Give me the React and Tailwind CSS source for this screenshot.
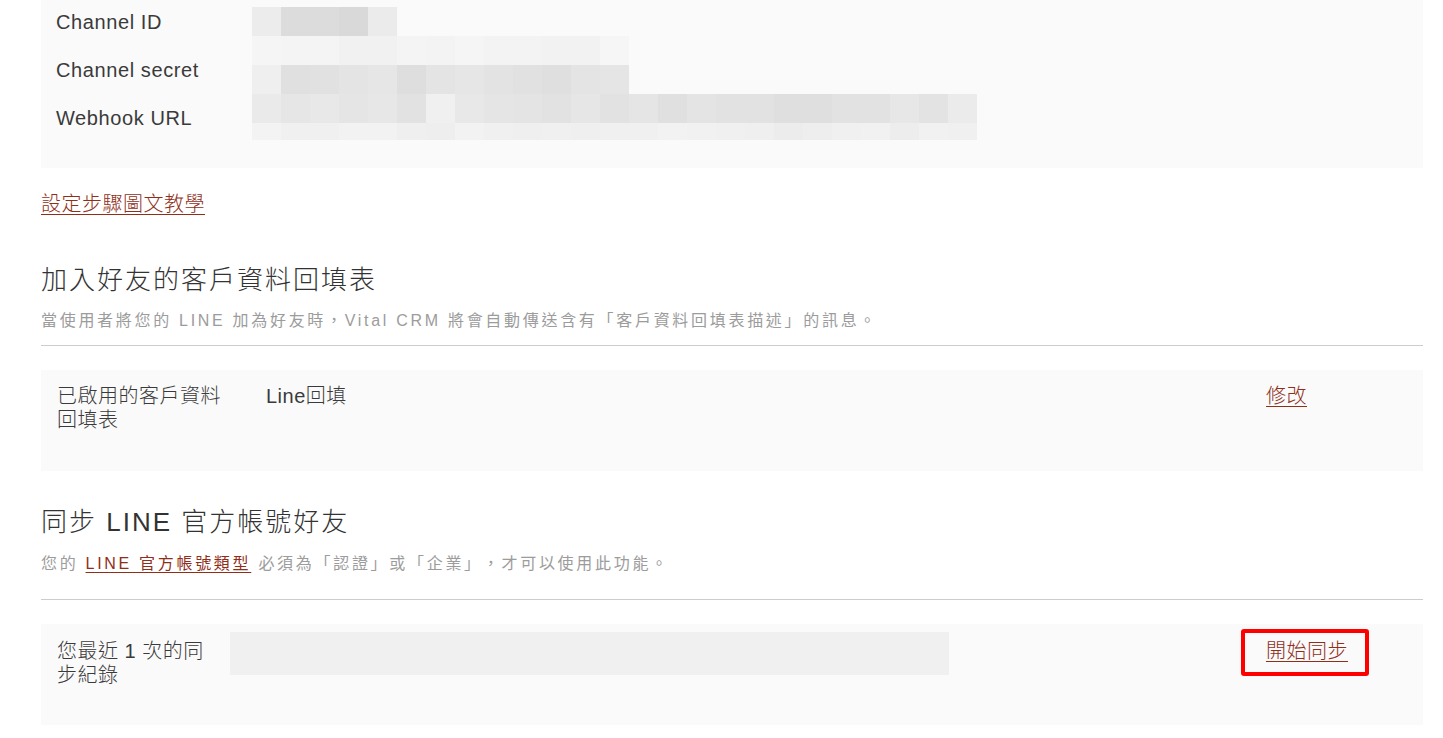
import React from "react";

const mosaicRows = [
  { y: 7, h: 29, c: [236, 220, 220, 217, 235] },
  { y: 36, h: 29, c: [245, 244, 244, 241, 241, 244, 243, 245, 243, 243, 242, 242, 246] },
  { y: 65, h: 29, c: [239, 224, 225, 228, 230, 222, 228, 230, 227, 225, 223, 228, 229] },
  {
    y: 94,
    h: 29,
    c: [234, 230, 232, 229, 231, 226, 240, 232, 229, 228, 226, 230, 226, 229, 224, 228, 226, 226, 223, 223, 226, 226, 231, 227, 235],
  },
  {
    y: 123,
    h: 17,
    c: [243, 240, 240, 242, 242, 239, 238, 242, 240, 239, 240, 239, 240, 240, 242, 241, 240, 239, 236, 238, 240, 241, 237, 241, 240],
  },
];

function Mosaic() {
  return (
    <svg width="725" height="133" viewBox="0 7 725 133" className="mt-[7px] shrink-0">
      {mosaicRows.map((r, i) =>
        r.c.map((g, j) => (
          <rect key={i + "-" + j} x={j * 29} y={r.y} width="29" height={r.h} fill={`rgb(${g},${g},${g})`} />
        ))
      )}
    </svg>
  );
}

const link = "text-[#8f2f1a] underline underline-offset-[3px] decoration-[1px]";

export default function App() {
  return (
    <div className="w-[1443px] h-[738px] overflow-hidden bg-white pl-[41px] pr-[20px] font-['Liberation_Sans','Noto_Sans_CJK_TC',sans-serif] text-[#333] [text-spacing-trim:space-all]">
      {/* top credentials panel */}
      <div className="h-[168px] bg-[#fafafa] flex pl-[15px]">
        <div className="w-[196px] -mt-[2px] text-[20px] tracking-[0.6px] leading-[48px] text-[#3a3a3a]">
          <div>Channel ID</div>
          <div>Channel secret</div>
          <div>Webhook URL</div>
        </div>
        <Mosaic />
      </div>

      <div className="mt-[24px] text-[20px] leading-[24px] tracking-[0.5px] font-light">
        <a href="#" className={link}>設定步驟圖文教學</a>
      </div>

      {/* section 1 */}
      <h2 className="mt-[46px] text-[26px] leading-[36px] tracking-[2px] font-light text-[#333]">加入好友的客戶資料回填表</h2>
      <p className="mt-[11px] text-[16px] leading-[24px] tracking-[2.7px] text-[#9c9c9c]">
        當使用者將您的 LINE 加為好友時，Vital CRM 將會自動傳送含有「客戶資料回填表描述」的訊息。
      </p>
      <div className="mt-[12px] h-px bg-[#cccccc]" />

      <div className="mt-[24px] h-[101px] bg-[#fafafa] flex pl-[16px] pt-[14px] text-[20px] leading-[24px] tracking-[0.5px] text-[#3a3a3a] font-light">
        <div className="w-[209px] whitespace-nowrap">
          已啟用的客戶資料
          <br />
          回填表
        </div>
        <div className="flex-1">Line回填</div>
        <div className="w-[157px]">
          <a href="#" className={link}>修改</a>
        </div>
      </div>

      {/* section 2 */}
      <h2 className="mt-[33px] text-[26px] leading-[36px] tracking-[2px] font-light text-[#333]">同步 LINE 官方帳號好友</h2>
      <p className="mt-[12px] text-[16px] leading-[24px] tracking-[2.7px] text-[#9c9c9c]">
        您的 <a href="#" className={link}>LINE 官方帳號類型</a> 必須為「認證」或「企業」，才可以使用此功能。
      </p>
      <div className="mt-[23px] h-px bg-[#cccccc]" />

      <div className="mt-[24px] h-[101px] bg-[#fafafa] flex pl-[16px] pt-[8px] text-[20px] leading-[24px] tracking-[0.5px] text-[#3a3a3a] font-light">
        <div className="w-[173px] pt-[7px] whitespace-nowrap">
          您最近 1 次的同
          <br />
          步紀錄
        </div>
        <div className="w-[719px] h-[43px] bg-[#f0f0f0]" />
        <div className="flex-1" />
        <div className="w-[157px] pt-[7px]">
          <span className="relative inline-block">
            <a href="#" className={link}>開始同步</a>
            <span className="absolute -left-[25px] -right-[21px] -top-[10px] -bottom-[13px] border-[4px] border-[#ff0000] rounded-[3px]" />
          </span>
        </div>
      </div>
    </div>
  );
}
